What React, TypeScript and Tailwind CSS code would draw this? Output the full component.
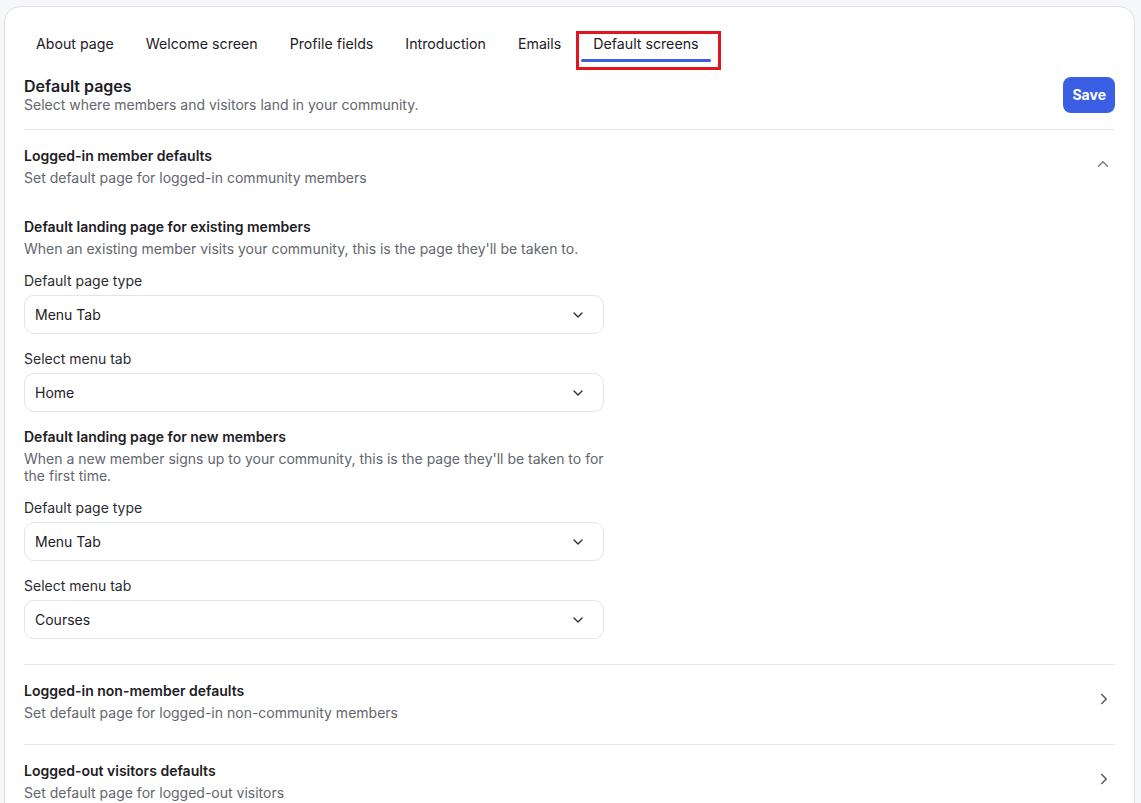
import { ChevronDown, ChevronRight, ChevronUp } from "lucide-react";

const tabs = [
  "About page",
  "Welcome screen",
  "Profile fields",
  "Introduction",
  "Emails",
  "Default screens",
];

function Select({ label, value }: { label: string; value: string }) {
  return (
    <div>
      <div className="text-sm leading-5 text-[#2a2d31]">{label}</div>
      <div className="mt-1 flex h-[39px] items-center justify-between rounded-[10px] border border-[#e2e4e8] pl-[10px] pr-[17px]">
        <span className="text-sm text-[#1d2024]">{value}</span>
        <ChevronDown size={16} strokeWidth={2} className="text-[#2a2d31]" />
      </div>
    </div>
  );
}

function Landing({
  title,
  desc,
  type,
  tab,
}: {
  title: string;
  desc: string;
  type: string;
  tab: string;
}) {
  return (
    <div className="max-w-[580px]">
      <div className="text-sm font-semibold leading-5 text-[#1d2024]">{title}</div>
      <div className="mt-[3px] text-sm leading-[17px] text-[#62666d]">{desc}</div>
      <div className="mt-[14px]">
        <Select label="Default page type" value={type} />
        <div className="mt-[15px]">
          <Select label="Select menu tab" value={tab} />
        </div>
      </div>
    </div>
  );
}

function Collapsed({ title, desc }: { title: string; desc: string }) {
  return (
    <div className="flex items-center justify-between border-t border-[#e7e8eb] pt-4 pb-[21px]">
      <div>
        <div className="text-sm font-semibold leading-5 text-[#1d2024]">{title}</div>
        <div className="mt-[2px] text-sm leading-5 text-[#62666d]">{desc}</div>
      </div>
      <ChevronRight size={18} strokeWidth={2} className="mr-[2px] mt-[-6px] text-[#55595f]" />
    </div>
  );
}

export default function App() {
  return (
    <div
      className="min-h-screen bg-[#f6f7f9] pl-[4px] pr-[6px] pt-[6px]"
      style={{ fontFamily: "Inter, 'Noto Sans', sans-serif" }}
    >
      <div className="min-h-[820px] rounded-t-[16px] border border-[#dfe1e6] bg-white px-[19px] pt-[21px]">
        {/* tabs */}
        <div className="flex gap-2">
          {tabs.map((t) => {
            const active = t === "Default screens";
            return (
              <div key={t} className="relative flex flex-col pt-[6px]">
                <span className="px-3 text-[14.2px] leading-5 text-[#1d2024]">{t}</span>
                <span
                  className={
                    active
                      ? "mt-[5px] h-[3px] rounded-full bg-[#3b5fe3]"
                      : "mt-[5px] h-[3px]"
                  }
                />
                {active && (
                  <div className="absolute left-[-5px] top-[3px] h-[39px] w-[145px] border-[3px] border-[#e3161f]" />
                )}
              </div>
            );
          })}
        </div>

        {/* header */}
        <div className="mt-[14px] flex items-start justify-between pb-[15px]">
          <div>
            <div className="text-base font-semibold leading-5 text-[#1d2024]">Default pages</div>
            <div className="text-sm leading-[18px] text-[#62666d]">
              Select where members and visitors land in your community.
            </div>
          </div>
          <button className="mt-px h-9 rounded-lg bg-[#3a5fe5] px-[9px] text-sm font-bold text-white">
            Save
          </button>
        </div>

        {/* logged-in member */}
        <div className="border-t border-[#e7e8eb] pt-4 pb-[25px]">
          <div className="flex items-center justify-between">
            <div>
              <div className="text-sm font-semibold leading-5 text-[#1d2024]">
                Logged-in member defaults
              </div>
              <div className="mt-[2px] text-sm leading-5 text-[#62666d]">
                Set default page for logged-in community members
              </div>
            </div>
            <ChevronUp size={18} strokeWidth={2} className="mr-[3px] mt-[-6px] text-[#7a7e85]" />
          </div>
          <div className="mt-[29px]">
            <Landing
              title="Default landing page for existing members"
              desc="When an existing member visits your community, this is the page they'll be taken to."
              type="Menu Tab"
              tab="Home"
            />
          </div>
          <div className="mt-[15px]">
            <Landing
              title="Default landing page for new members"
              desc="When a new member signs up to your community, this is the page they'll be taken to for the first time."
              type="Menu Tab"
              tab="Courses"
            />
          </div>
        </div>

        <Collapsed
          title="Logged-in non-member defaults"
          desc="Set default page for logged-in non-community members"
        />
        <Collapsed
          title="Logged-out visitors defaults"
          desc="Set default page for logged-out visitors"
        />
      </div>
    </div>
  );
}
